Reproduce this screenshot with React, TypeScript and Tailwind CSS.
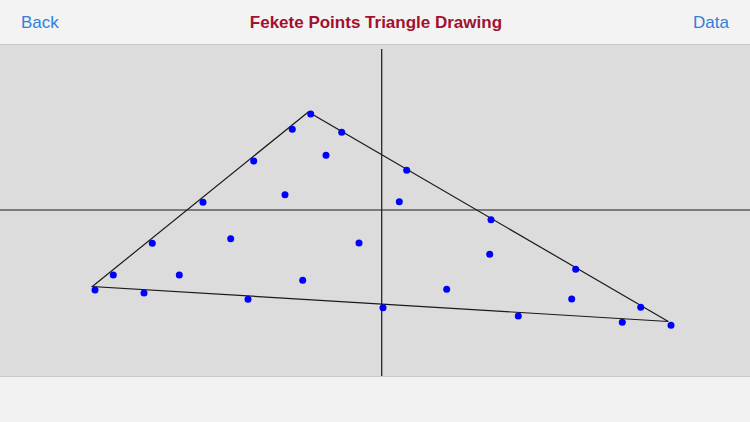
const dots: [number, number][] = [
  [310.7, 114], [292.3, 129.3], [341.7, 132.3], [326, 155.3], [253.7, 161],
  [285, 194.7], [203, 202.3], [230.7, 238.7], [359, 243], [152.3, 243.3],
  [113.3, 275], [179.3, 275], [302.7, 280.3], [95, 290], [144, 293],
  [248, 299.3], [406.7, 170.3], [399.3, 201.7], [491, 219.7], [489.7, 254.3],
  [575.7, 269.3], [446.7, 289.3], [571.7, 299], [383, 307.7], [640.7, 307.3],
  [518.3, 316], [622.3, 322.3], [671, 325.3],
];

// canvas starts at page y = 45
const TOP = 45;

export default function App() {
  return (
    <div className="flex flex-col w-[750px] h-[422px] bg-[#f2f2f2] font-['Liberation_Sans',sans-serif] overflow-hidden">
      <div className="flex items-center justify-between h-[45px] pt-[2px] px-[21px] border-b border-[#c8c8c8] bg-[#f3f3f3]">
        <span className="text-[17px] text-[#2e80db]">Back</span>
        <span className="text-[17px] font-bold text-[#a3102f]">Fekete Points Triangle Drawing</span>
        <span className="text-[17px] text-[#2e80db]">Data</span>
      </div>

      <div className="h-[332px] bg-[#dcdcdc] border-b border-[#c8c8c8]">
        <svg width="750" height="331" viewBox="0 0 750 331" className="block">
          <line x1="0" y1={210 - TOP} x2="750" y2={210 - TOP} stroke="#1a1a1a" strokeWidth="1.2" />
          <line x1="381.7" y1={49 - TOP} x2="381.7" y2="331" stroke="#1a1a1a" strokeWidth="1.2" />
          <polygon
            points={`308.3,${112 - TOP} 92.3,${286.5 - TOP} 668.3,${321.5 - TOP}`}
            fill="none"
            stroke="#1a1a1a"
            strokeWidth="1.2"
          />
          {dots.map(([x, y], i) => (
            <circle key={i} cx={x} cy={y - TOP} r="3.5" fill="#0000ff" />
          ))}
        </svg>
      </div>

      <div className="flex-1 bg-[#f2f2f2]" />
    </div>
  );
}
